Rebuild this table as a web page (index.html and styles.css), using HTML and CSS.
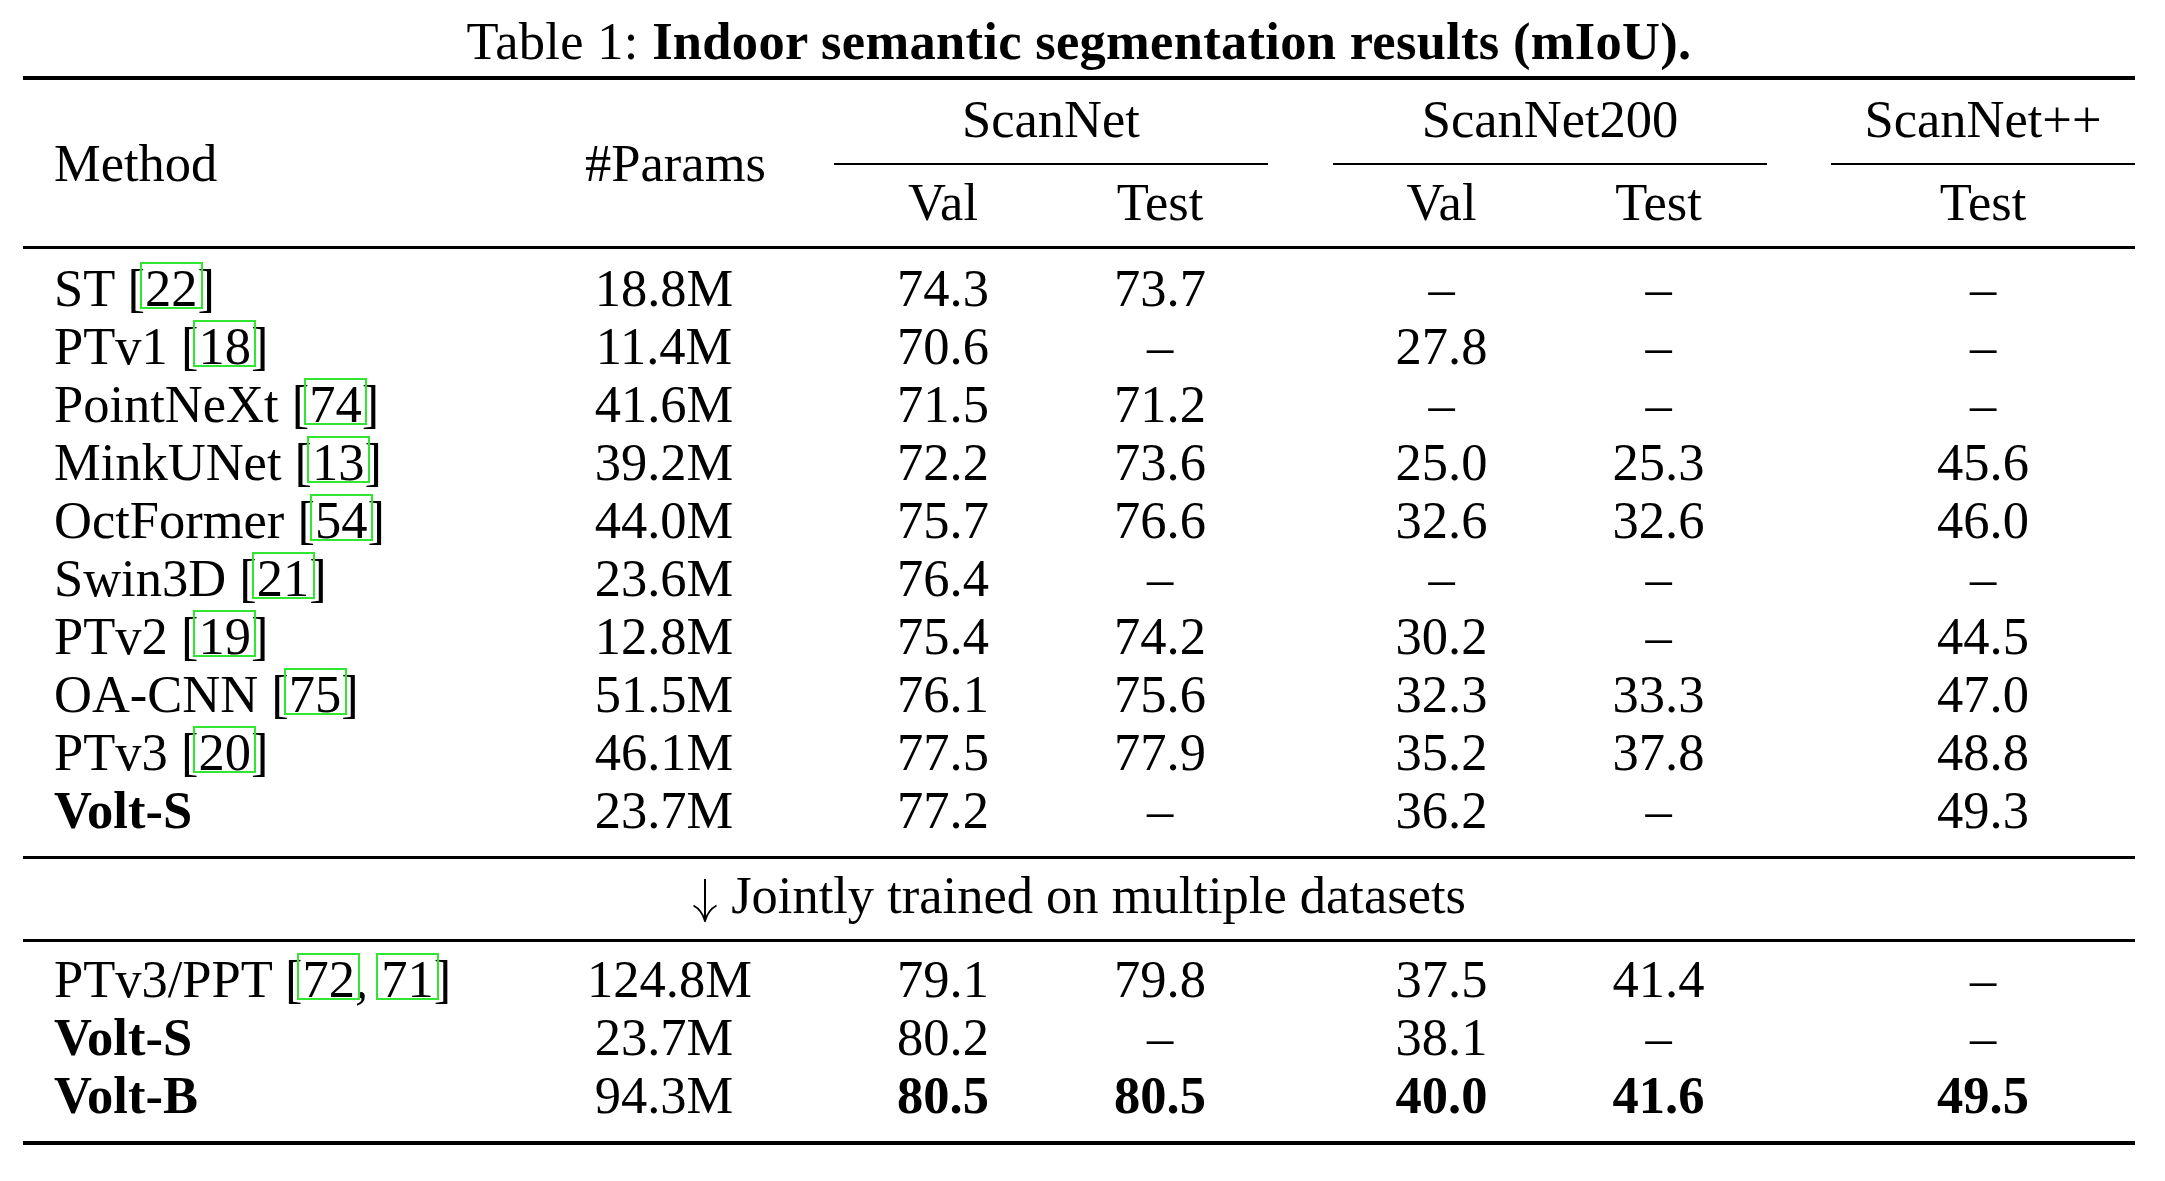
FILE: index.html
```html
<!DOCTYPE html>
<html lang="en">
<head>
<meta charset="utf-8">
<title>Table 1</title>
<link rel="stylesheet" href="styles.css">
</head>
<body>
<div class="page">
  <div class="caption">Table 1: <b>Indoor semantic segmentation results (mIoU).</b></div>
  <div class="rule heavy top"></div>
  <div class="head">
    <div class="h-method">Method</div>
    <div class="h-params">#Params</div>
    <div class="grp g1">ScanNet</div>
    <div class="grp g2">ScanNet200</div>
    <div class="grp g3">ScanNet++</div>
    <div class="sub v1">Val</div>
    <div class="sub t1">Test</div>
    <div class="sub v2">Val</div>
    <div class="sub t2">Test</div>
    <div class="sub t3">Test</div>
  </div>
  <div class="rule light"></div>
  <div class="body">
    <div class="row"><span class="m">ST [<span class="cite">22</span>]</span><span class="p">18.8M</span><span class="v1">74.3</span><span class="t1">73.7</span><span class="v2">–</span><span class="t2">–</span><span class="t3">–</span></div>
    <div class="row"><span class="m">PTv1 [<span class="cite">18</span>]</span><span class="p">11.4M</span><span class="v1">70.6</span><span class="t1">–</span><span class="v2">27.8</span><span class="t2">–</span><span class="t3">–</span></div>
    <div class="row"><span class="m">PointNeXt [<span class="cite">74</span>]</span><span class="p">41.6M</span><span class="v1">71.5</span><span class="t1">71.2</span><span class="v2">–</span><span class="t2">–</span><span class="t3">–</span></div>
    <div class="row"><span class="m">MinkUNet [<span class="cite">13</span>]</span><span class="p">39.2M</span><span class="v1">72.2</span><span class="t1">73.6</span><span class="v2">25.0</span><span class="t2">25.3</span><span class="t3">45.6</span></div>
    <div class="row"><span class="m">OctFormer [<span class="cite">54</span>]</span><span class="p">44.0M</span><span class="v1">75.7</span><span class="t1">76.6</span><span class="v2">32.6</span><span class="t2">32.6</span><span class="t3">46.0</span></div>
    <div class="row"><span class="m">Swin3D [<span class="cite">21</span>]</span><span class="p">23.6M</span><span class="v1">76.4</span><span class="t1">–</span><span class="v2">–</span><span class="t2">–</span><span class="t3">–</span></div>
    <div class="row"><span class="m">PTv2 [<span class="cite">19</span>]</span><span class="p">12.8M</span><span class="v1">75.4</span><span class="t1">74.2</span><span class="v2">30.2</span><span class="t2">–</span><span class="t3">44.5</span></div>
    <div class="row"><span class="m">OA-CNN [<span class="cite">75</span>]</span><span class="p">51.5M</span><span class="v1">76.1</span><span class="t1">75.6</span><span class="v2">32.3</span><span class="t2">33.3</span><span class="t3">47.0</span></div>
    <div class="row"><span class="m">PTv3 [<span class="cite">20</span>]</span><span class="p">46.1M</span><span class="v1">77.5</span><span class="t1">77.9</span><span class="v2">35.2</span><span class="t2">37.8</span><span class="t3">48.8</span></div>
    <div class="row"><span class="m b">Volt-S</span><span class="p">23.7M</span><span class="v1">77.2</span><span class="t1">–</span><span class="v2">36.2</span><span class="t2">–</span><span class="t3">49.3</span></div>
  </div>
  <div class="rule light"></div>
  <div class="joint"><svg class="arrow" width="26" height="44" viewBox="0 0 26 44" aria-hidden="true"><path d="M13 1 V42.5" stroke="#000" stroke-width="2" fill="none"/><path d="M1.5 27.5 C7 30.5 11 36 13 43 C15 36 19 30.5 24.5 27.5" stroke="#000" stroke-width="1.8" fill="none" stroke-linejoin="miter"/></svg> Jointly trained on multiple datasets</div>
  <div class="rule light"></div>
  <div class="body body2">
    <div class="row"><span class="m">PTv3/PPT [<span class="cite">72</span>, <span class="cite">71</span>]</span><span class="p wide">124.8M</span><span class="v1">79.1</span><span class="t1">79.8</span><span class="v2">37.5</span><span class="t2">41.4</span><span class="t3">–</span></div>
    <div class="row"><span class="m b">Volt-S</span><span class="p">23.7M</span><span class="v1">80.2</span><span class="t1">–</span><span class="v2">38.1</span><span class="t2">–</span><span class="t3">–</span></div>
    <div class="row"><span class="m b">Volt-B</span><span class="p">94.3M</span><span class="v1 b">80.5</span><span class="t1 b">80.5</span><span class="v2 b">40.0</span><span class="t2 b">41.6</span><span class="t3 b">49.5</span></div>
  </div>
  <div class="rule heavy"></div>
</div>
</body>
</html>
```

FILE: styles.css
```css
* {
  box-sizing: border-box;
  margin: 0;
  padding: 0;
}

html, body {
  background: #ffffff;
}

body {
  margin: 0;
  color: #000000;
  font-family: "Liberation Serif", "Times New Roman", serif;
  font-size: 52.5px;
  line-height: 58px;
}

.page {
  width: 2112px;
  margin-left: 23px;
  padding-top: 12px;
}

.caption {
  text-align: center;
  height: 58px;
  white-space: nowrap;
  letter-spacing: 0.3px;
}

.caption b {
  font-weight: bold;
}

.rule {
  background: #000000;
}

.rule.heavy {
  height: 4px;
}

.rule.top {
  margin-top: 6px;
}

.rule.light {
  height: 3px;
}

/* shared column template */
.head,
.row {
  display: grid;
  grid-template-columns: 537px 208px 66px 218px 216px 65px 217px 217px 64px 304px;
}

.head {
  grid-template-rows: 75px 58px;
  row-gap: 8px;
  padding-top: 10px;
  padding-bottom: 15px;
}

.h-method {
  grid-column: 1;
  grid-row: 1 / 3;
  padding-left: 31px;
  padding-top: 44px;
}

.h-params {
  grid-column: 2;
  grid-row: 1 / 3;
  padding-top: 44px;
  padding-left: 23px;
  text-align: center;
  white-space: nowrap;
}

.grp {
  grid-row: 1;
  text-align: center;
  padding-bottom: 15px;
  border-bottom: 2px solid #000000;
  white-space: nowrap;
}

.g1 { grid-column: 4 / 6; }
.g2 { grid-column: 7 / 9; }
.g3 { grid-column: 10 / 11; }

.sub {
  grid-row: 2;
  text-align: center;
}

.body {
  padding-top: 10px;
  padding-bottom: 17px;
}

.body2 {
  padding-top: 8px;
  padding-bottom: 17px;
}

.row {
  height: 58px;
  white-space: nowrap;
}

.row > span {
  text-align: center;
}

.m {
  grid-column: 1;
  padding-left: 31px;
  text-align: left !important;
}

.p { grid-column: 2; }
.p.wide { padding-left: 11px; }
.v1 { grid-column: 4; }
.t1 { grid-column: 5; }
.v2 { grid-column: 7; }
.t2 { grid-column: 8; }
.t3 { grid-column: 10; }

.b {
  font-weight: bold;
}

.cite {
  position: relative;
}

.cite::after {
  content: "";
  position: absolute;
  left: -5px;
  right: -5.5px;
  top: 3px;
  bottom: 8.5px;
  border: 2px solid #30e630;
}

.joint {
  text-align: center;
  padding-top: 7px;
  padding-bottom: 15px;
  white-space: nowrap;
}

.arrow {
  vertical-align: -9px;
}
```
